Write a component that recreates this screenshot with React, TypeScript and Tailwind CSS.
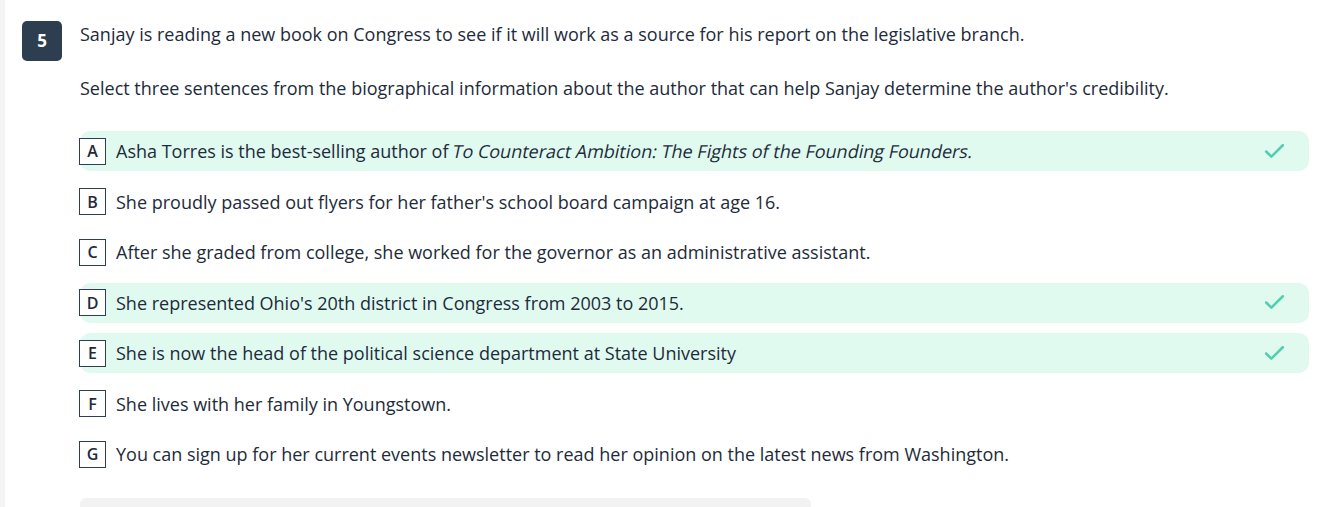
import { Check } from "lucide-react";

type Option = { letter: string; text: React.ReactNode; correct?: boolean };

const OPTIONS: Option[] = [
  {
    letter: "A",
    text: (
      <>
        Asha Torres is the best-selling author of{" "}
        <span className="inline-block -skew-x-12">To Counteract Ambition: The Fights of the Founding Founders.</span>
      </>
    ),
    correct: true,
  },
  { letter: "B", text: "She proudly passed out flyers for her father's school board campaign at age 16." },
  { letter: "C", text: "After she graded from college, she worked for the governor as an administrative assistant." },
  { letter: "D", text: "She represented Ohio's 20th district in Congress from 2003 to 2015.", correct: true },
  { letter: "E", text: "She is now the head of the political science department at State University", correct: true },
  { letter: "F", text: "She lives with her family in Youngstown." },
  { letter: "G", text: "You can sign up for her current events newsletter to read her opinion on the latest news from Washington." },
];

export default function App() {
  return (
    <div className="flex h-[507px] w-[1324px] overflow-hidden bg-white text-[#1d2b3a] font-['Open_Sans',sans-serif]">
      {/* Left gutter */}
      <div className="w-[5px] shrink-0 bg-[#f4f4f4]" />

      <div className="flex flex-1 pl-[17px] pt-[21px]">
        {/* Question number */}
        <div className="flex h-10 w-10 shrink-0 items-center justify-center rounded-[5px] bg-[#2c3e50] text-[17px] font-bold text-white">
          5
        </div>

        <div className="ml-[18px] flex-1 pr-[15px]">
          <p className="text-[18px] leading-[26px]">
            Sanjay is reading a new book on Congress to see if it will work as a source for his report on the legislative branch.
          </p>
          <p className="mt-[28px] text-[18px] leading-[26px]">
            Select three sentences from the biographical information about the author that can help Sanjay determine the author's credibility.
          </p>

          <ul className="mt-[30px] flex flex-col gap-[10.5px]">
            {OPTIONS.map((o) => (
              <li
                key={o.letter}
                className={
                  "flex h-10 items-center rounded-[10px] pr-[22px] " +
                  (o.correct ? "bg-[#e0faf0]" : "")
                }
              >
                <span className="-ml-px flex h-[27px] w-[27px] shrink-0 items-center justify-center border-[1.5px] border-[#2c3e50] bg-white text-[16px] font-semibold">
                  {o.letter}
                </span>
                <span className="ml-[10px] flex-1 text-[18px] leading-[26px]">{o.text}</span>
                {o.correct && <Check className="h-[25px] w-[25px] text-[#4fd1b0]" strokeWidth={2.4} />}
              </li>
            ))}
          </ul>

          {/* Next panel, cut off */}
          <div className="mt-[24px] h-6 w-[731px] rounded-t-[6px] bg-[#f2f2f2]" />
        </div>
      </div>
    </div>
  );
}
